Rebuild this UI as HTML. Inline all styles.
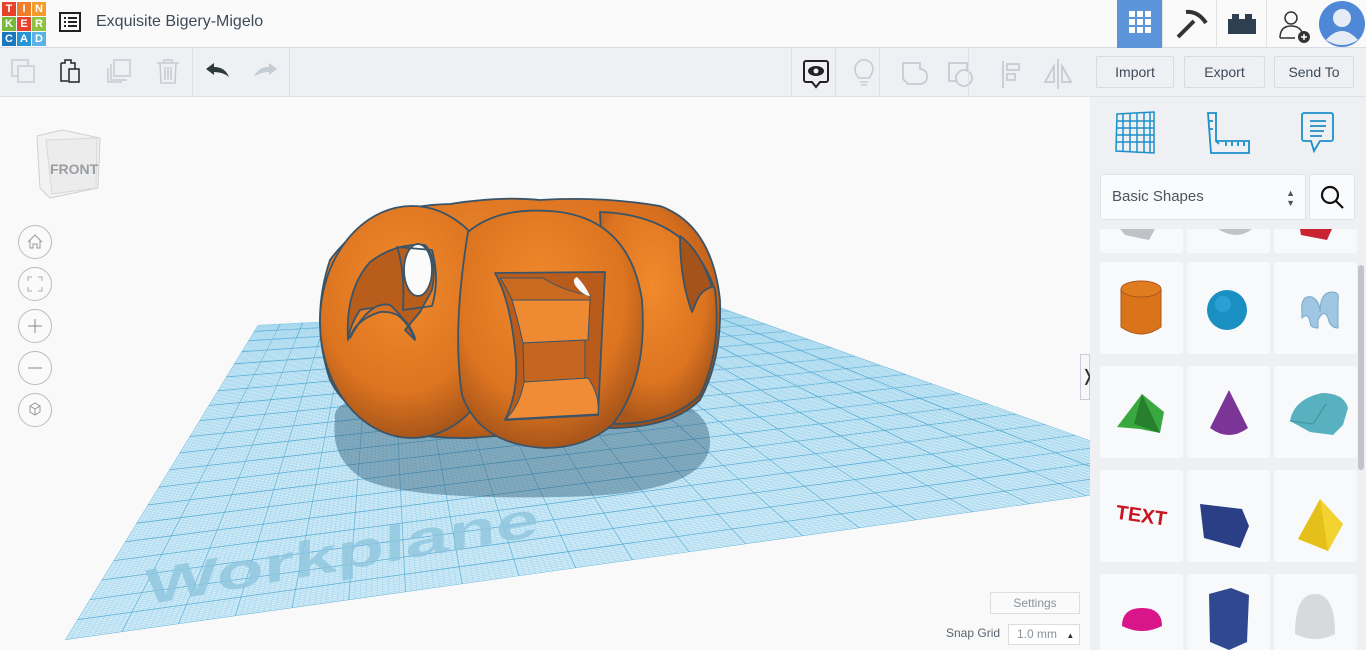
<!DOCTYPE html>
<html><head><meta charset="utf-8"><style>
*{box-sizing:border-box;margin:0;padding:0}
body{width:1366px;height:650px;overflow:hidden;background:#f9f9f9;font-family:"Liberation Sans",sans-serif;position:relative;color:#333}
.top{position:absolute;left:0;top:0;width:1366px;height:48px;background:#fafafa;border-bottom:1px solid #d8dde3}
.tool{position:absolute;left:0;top:48px;width:1366px;height:49px;background:#eef0f3;border-bottom:1px solid #dde1e6}
.logo{position:absolute;left:2px;top:2px}
.logo div{position:absolute;width:14px;height:14px;color:#fff;font-weight:bold;font-size:11px;text-align:center;line-height:14px}
.title{position:absolute;left:96px;top:13px;font-size:16px;color:#3d4a59}
.btn{position:absolute;top:56px;height:32px;border:1px solid #d8dce1;background:#eef0f3;border-radius:2px;font-size:14px;color:#3d4a59;text-align:center;line-height:30px}
.side{position:absolute;left:1090px;top:97px;width:276px;height:553px;background:#eef0f3}
.tile{position:absolute;width:83px;height:92px;background:#f8f9fa;border-radius:3px}
.nav{position:absolute;left:18px;width:34px;height:34px;border:1px solid #bbb;border-radius:50%;background:#fafafa}
</style></head><body>
<div class="top">
<div class="logo">
<div style="left:0;top:0;background:#e8412b">T</div><div style="left:15px;top:0;background:#f07d2a">I</div><div style="left:30px;top:0;background:#f59b2c">N</div>
<div style="left:0;top:15px;background:#79b83d">K</div><div style="left:15px;top:15px;background:#e8412b">E</div><div style="left:30px;top:15px;background:#8cc342">R</div>
<div style="left:0;top:30px;background:#1a76bd">C</div><div style="left:15px;top:30px;background:#2794d6">A</div><div style="left:30px;top:30px;background:#5ab3e4">D</div>
</div>
<svg style="position:absolute;left:59px;top:12px" width="22" height="22"><rect x="1" y="1" width="20" height="18" fill="none" stroke="#222" stroke-width="2"/><g fill="#222"><rect x="5" y="5" width="2" height="2"/><rect x="9" y="5" width="9" height="2"/><rect x="5" y="9" width="2" height="2"/><rect x="9" y="9" width="9" height="2"/><rect x="5" y="13" width="2" height="2"/><rect x="9" y="13" width="9" height="2"/></g></svg>
<div class="title">Exquisite Bigery-Migelo</div>
<div style="position:absolute;left:1117px;top:0;width:45px;height:48px;background:#5b94d9"></div>
<svg style="position:absolute;left:1129px;top:11px" width="22" height="24"><g fill="#fff"><rect x="0" y="0" width="6" height="6"/><rect x="8" y="0" width="6" height="6"/><rect x="16" y="0" width="6" height="6"/><rect x="0" y="8" width="6" height="6"/><rect x="8" y="8" width="6" height="6"/><rect x="16" y="8" width="6" height="6"/><rect x="0" y="16" width="6" height="6"/><rect x="8" y="16" width="6" height="6"/><rect x="16" y="16" width="6" height="6"/></g></svg>
<svg style="position:absolute;left:1174px;top:9px" width="34" height="30"><path d="M4 28 L20 12 M12 3 Q24 2 32 14" stroke="#333" stroke-width="4" fill="none"/></svg>
<div style="position:absolute;left:1162px;top:0;width:1px;height:48px;background:#e2e2e2"></div>
<div style="position:absolute;left:1216px;top:0;width:1px;height:48px;background:#e2e2e2"></div>
<div style="position:absolute;left:1266px;top:0;width:1px;height:48px;background:#e2e2e2"></div>
<svg style="position:absolute;left:1228px;top:14px" width="28" height="20"><path d="M0 5h4V0h7v5h6V0h7v5h4v15H0z" fill="#2f3f52"/></svg>
<svg style="position:absolute;left:1277px;top:10px" width="36" height="34"><circle cx="14" cy="8" r="6" fill="none" stroke="#333" stroke-width="1.5"/><path d="M3 28 Q3 16 14 16 Q22 16 25 22" fill="none" stroke="#333" stroke-width="1.5"/><line x1="3" y1="28" x2="18" y2="28" stroke="#333" stroke-width="1.5"/><circle cx="27" cy="27" r="6" fill="#333"/><path d="M24 27h6M27 24v6" stroke="#fff" stroke-width="1.5"/></svg>
<svg style="position:absolute;left:1318px;top:0" width="48" height="48"><circle cx="24" cy="24" r="23" fill="#4f88d6"/><circle cx="24" cy="18" r="9" fill="#e6ecf5"/><path d="M8 40 Q24 22 40 40 Q24 50 8 40z" fill="#e6ecf5"/></svg>
</div>
<div class="tool">
<svg style="position:absolute;left:10px;top:10px" width="28" height="28" fill="none" stroke="#c6ccd4" stroke-width="1.5"><rect x="2" y="2" width="16" height="16"/><rect x="8" y="8" width="16" height="16" fill="#eef0f3"/></svg>
<svg style="position:absolute;left:58px;top:9px" width="26" height="28" fill="none" stroke="#222" stroke-width="1.5"><path d="M3 6h4V3h6v3h4v6"/><path d="M3 6v18h7"/><rect x="11" y="12" width="10" height="13"/></svg>
<svg style="position:absolute;left:106px;top:10px" width="28" height="28" fill="none" stroke="#c6ccd4" stroke-width="1.5"><rect x="8" y="2" width="16" height="16"/><path d="M5 6v16h16M2 10v14h14"/></svg>
<svg style="position:absolute;left:156px;top:10px" width="24" height="28" fill="none" stroke="#c6ccd4" stroke-width="1.5"><path d="M1 5h22M8 5V2h8v3M4 5l1 20h14l1-20M9 9v13M12 9v13M15 9v13"/></svg>
<div style="position:absolute;left:192px;top:0;width:1px;height:48px;background:#dde1e6"></div>
<svg style="position:absolute;left:205px;top:14px" width="26" height="18"><path d="M1 7 L9 1 V5 Q20 5 24 15 Q18 10 9 10 V13z" fill="#2c3a3a"/></svg>
<svg style="position:absolute;left:252px;top:14px" width="26" height="18"><path d="M25 7 L17 1 V5 Q6 5 2 15 Q8 10 17 10 V13z" fill="#c6ccd4"/></svg>
<div style="position:absolute;left:289px;top:0;width:1px;height:48px;background:#dde1e6"></div>
<div style="position:absolute;left:791px;top:0;width:1px;height:48px;background:#dde1e6"></div>
<svg style="position:absolute;left:802px;top:11px" width="28" height="30"><path d="M4 2h20a2 2 0 0 1 2 2v17a2 2 0 0 1-2 2h-6l-4 5-4-5H4a2 2 0 0 1-2-2V4a2 2 0 0 1 2-2z" fill="none" stroke="#222" stroke-width="2"/><ellipse cx="14" cy="12" rx="8" ry="5" fill="#222"/><circle cx="14" cy="12" r="2.5" fill="#eef0f3"/></svg>
<div style="position:absolute;left:835px;top:0;width:1px;height:48px;background:#dde1e6"></div>
<svg style="position:absolute;left:852px;top:10px" width="24" height="32" fill="none" stroke="#c6ccd4" stroke-width="1.6"><path d="M7 20 Q1 14 4 7 Q8 1 13 2 Q20 3 21 10 Q21 15 17 20z M8 24h8M9 27h6"/></svg>
<div style="position:absolute;left:879px;top:0;width:1px;height:48px;background:#dde1e6"></div>
<svg style="position:absolute;left:900px;top:12px" width="30" height="28" fill="none" stroke="#c6ccd4" stroke-width="1.8"><path d="M3 3h17v6a7 7 0 0 1 7 8 7 7 0 0 1-7 7H8L3 19z"/></svg>
<svg style="position:absolute;left:946px;top:12px" width="30" height="28" fill="none" stroke="#c6ccd4" stroke-width="1.8"><rect x="3" y="3" width="18" height="18"/><circle cx="18" cy="18" r="8" fill="#eef0f3"/></svg>
<div style="position:absolute;left:968px;top:0;width:1px;height:48px;background:#dde1e6"></div>
<svg style="position:absolute;left:1000px;top:12px" width="24" height="28" fill="none" stroke="#c6ccd4" stroke-width="1.8"><path d="M3 1v27"/><rect x="7" y="4" width="12" height="6"/><rect x="7" y="14" width="8" height="6"/></svg>
<svg style="position:absolute;left:1042px;top:10px" width="34" height="32" fill="none" stroke="#c6ccd4" stroke-width="1.8"><path d="M16 1v30M12 8L3 24h9zM20 8l9 16h-9z"/></svg>
</div>
<div class="btn" style="left:1096px;width:78px">Import</div>
<div class="btn" style="left:1184px;width:81px">Export</div>
<div class="btn" style="left:1274px;width:80px">Send To</div>

<!-- viewport -->
<svg style="position:absolute;left:0;top:97px" width="1090" height="553" viewBox="0 97 1090 553">
<defs><clipPath id="cp"><polygon points="258,325 705,302 1200,480 65,640"/></clipPath>
<radialGradient id="og" cx="45%" cy="35%" r="65%"><stop offset="0" stop-color="#f08a2c"/><stop offset=".7" stop-color="#dc7420"/><stop offset="1" stop-color="#a9561a"/></radialGradient>
<radialGradient id="og2" cx="40%" cy="35%" r="70%"><stop offset="0" stop-color="#ef8a2e"/><stop offset=".75" stop-color="#d86f1f"/><stop offset="1" stop-color="#9c4e16"/></radialGradient>
</defs>
<polygon points="258,325 705,302 1200,480 65,640" fill="#d4edf8"/>
<g clip-path="url(#cp)" id="grid"></g>
<text x="0" y="0" font-size="62" font-weight="bold" fill="#8fc6de" opacity=".8" font-family="Liberation Sans" textLength="400" lengthAdjust="spacingAndGlyphs" transform="translate(145,605) rotate(-10) scale(1,0.8) skewX(-8)">Workplane</text>
<path d="M335 420 Q330 395 400 398 L640 395 Q712 400 710 445 Q705 495 560 497 Q410 500 365 480 Q330 460 335 420z" fill="#2f5d78" opacity=".45"/>
<g stroke="#3a5468" stroke-width="1.8" stroke-linejoin="round">
<!-- back body -->
<path d="M330 260 Q370 205 450 204 Q500 196 540 200 Q600 196 660 206 Q712 225 720 300 Q722 360 700 400 Q670 430 600 428 L470 438 Q360 440 330 380 Q310 320 330 260z" fill="url(#og2)"/>
<!-- left lobe -->
<ellipse cx="412" cy="322" rx="92" ry="116" fill="url(#og)"/>
<!-- right lobe -->
<path d="M600 212 Q690 215 715 290 Q722 350 700 395 Q670 425 610 424z" fill="url(#og)"/>
<!-- right hole -->
<path d="M680 236 Q700 250 712 287 Q700 290 695 305 L692 312 Q680 280 680 236z" fill="#a4531a"/>
<!-- left hole -->
<path d="M348 340 Q345 290 370 262 Q395 243 425 245 Q438 258 432 290 L420 312 L405 330 L415 340 Q400 300 360 310 Q350 325 348 340z" fill="#b95d1c"/>
<path d="M350 338 Q355 320 380 312 Q405 310 415 338 Q405 318 390 305 Q370 300 350 338z" fill="#d67022"/>
<ellipse cx="418" cy="270" rx="14" ry="26" fill="#fbfbfb"/>
<path d="M397 247 Q405 270 403 310 L432 306 Q440 280 432 250z" fill="none"/>
<!-- center front lobe -->
<path d="M468 232 Q500 205 560 212 Q630 222 642 300 Q648 380 612 425 Q585 448 545 448 Q480 445 462 395 Q452 330 468 232z" fill="url(#og)"/>
<!-- front hole -->
<path d="M495 273 L605 272 L598 415 L505 420 Q520 390 515 350 Q510 300 495 273z" fill="#b95b1b"/>
<path d="M543 278 Q565 292 590 295 L590 302 L512 300 Q505 285 500 278z" fill="#c96a20" stroke-width="1"/>
<path d="M512 300 L590 300 L588 340 L523 343 Q518 320 512 300z" fill="#ee8a32" stroke-width="1"/>
<path d="M523 343 L585 340 L585 380 L524 382z" fill="#c46520" stroke-width="1"/>
<path d="M524 382 L588 378 Q600 395 598 414 L506 419 Q520 405 524 382z" fill="#f08c35" stroke-width="1"/>
<path d="M577 277 Q585 285 590 296 Q582 295 575 285 Q572 279 577 277z" fill="#fbfbfb" stroke="none"/>
</g>
<g transform="translate(32,128)">
<path d="M5 8 L30 2 L68 10 L66 60 L18 70 L8 60z" fill="#f2f2f2" stroke="#cfcfcf"/>
<path d="M14 12 L65 10 L64 60 L20 66z" fill="#ececec" stroke="#d8d8d8"/>
<text x="18" y="46" font-size="14" font-weight="bold" fill="#9a9ea3" font-family="Liberation Sans">FRONT</text>
</g>
</svg>
<div class="nav" style="top:225px"><svg width="32" height="32"><path d="M9 16l7-7 7 7M11 14v8h3v-4h4v4h3v-8" fill="none" stroke="#999"/></svg></div>
<div class="nav" style="top:267px"><svg width="32" height="32" fill="none" stroke="#aaa"><path d="M9 13V9h4M19 9h4v4M23 19v4h-4M13 23H9v-4"/></svg></div>
<div class="nav" style="top:309px"><svg width="32" height="32"><path d="M9 16h14M16 9v14" stroke="#888"/></svg></div>
<div class="nav" style="top:351px"><svg width="32" height="32"><path d="M9 16h14" stroke="#888"/></svg></div>
<div class="nav" style="top:393px"><svg width="32" height="32" fill="none" stroke="#999"><path d="M11 12l5-3 5 3v6l-5 3-5-3zM11 12l5 3 5-3M16 15v6"/></svg></div>
<div style="position:absolute;left:990px;top:592px;width:90px;height:22px;border:1px solid #ddd;background:#fafafa;font-size:12px;color:#8a929a;text-align:center;line-height:20px">Settings</div>
<div style="position:absolute;left:946px;top:626px;font-size:12px;color:#5a6470">Snap Grid</div>
<div style="position:absolute;left:1008px;top:624px;width:72px;height:21px;border:1px solid #ddd;background:#fff;font-size:12px;color:#8a929a;line-height:19px;padding-left:8px">1.0 mm <span style="font-size:8px;color:#333;margin-left:6px">▲</span></div>
<div style="position:absolute;left:1080px;top:354px;width:10px;height:46px;border:1px solid #ccd;background:#f8f8f8;font-size:16px;line-height:44px;text-align:center">❭</div>

<div class="side">
<svg style="position:absolute;left:24px;top:14px" width="44" height="44" fill="none" stroke="#1d8fc9" stroke-width="1.5"><path d="M3 3 L40 1 L40 42 L2 40z"/><path d="M3 10h37M3 17h37M3 24h37M3 31h37M9 2v39M16 2v39M23 2v40M30 1v41M36 1v41"/></svg>
<svg style="position:absolute;left:116px;top:14px" width="46" height="46" fill="none" stroke="#1d8fc9" stroke-width="1.8"><path d="M2 2h8v28h33v12H5zM10 30l3 3"/><path d="M20 31v4M26 31v4M32 31v4M38 31v4M3 10h4M3 18h4"/></svg>
<svg style="position:absolute;left:210px;top:14px" width="36" height="46" fill="none" stroke="#1d8fc9" stroke-width="1.8"><path d="M4 2h27a2 2 0 0 1 2 2v24a2 2 0 0 1-2 2H20l-6 10-3-10H4a2 2 0 0 1-2-2V4a2 2 0 0 1 2-2zM10 10h16M10 15h16M10 20h14M10 25h12"/></svg>
<div style="position:absolute;left:10px;top:77px;width:206px;height:46px;background:#fafbfc;border:1px solid #dfe3e8;border-radius:3px;font-size:15px;color:#4a5562;line-height:44px;padding-left:11px">Basic Shapes<span style="position:absolute;right:10px;top:0;font-size:9px;line-height:10px;padding-top:13px">▲<br>▼</span></div>
<div style="position:absolute;left:219px;top:77px;width:46px;height:46px;background:#fafbfc;border:1px solid #dfe3e8;border-radius:3px"><svg width="44" height="44" fill="none" stroke="#111" stroke-width="2.2"><circle cx="20" cy="20" r="8"/><path d="M26 26l7 7"/></svg></div>
<div style="position:absolute;left:0;top:132px;width:276px;height:421px;overflow:hidden">
<div class="tile" style="left:10px;top:-68px"></div><div class="tile" style="left:97px;top:-68px"></div><div class="tile" style="left:184px;top:-68px"></div>
<div class="tile" style="left:10px;top:33px"></div><div class="tile" style="left:97px;top:33px"></div><div class="tile" style="left:184px;top:33px"></div>
<div class="tile" style="left:10px;top:137px"></div><div class="tile" style="left:97px;top:137px"></div><div class="tile" style="left:184px;top:137px"></div>
<div class="tile" style="left:10px;top:241px"></div><div class="tile" style="left:97px;top:241px"></div><div class="tile" style="left:184px;top:241px"></div>
<div class="tile" style="left:10px;top:345px"></div><div class="tile" style="left:97px;top:345px"></div><div class="tile" style="left:184px;top:345px"></div>
<svg style="position:absolute;left:0;top:0" width="270" height="421">
<path d="M30 0h35l-6 11-24-5z" fill="#bfc3c8"/><path d="M128 0h34q-15 12-34 0z" fill="#c0c3c8"/><path d="M210 0h32l-5 11-26-5z" fill="#c72331"/>
<path d="M31 60v38q20 14 40 0v-38z" fill="#d9741a" stroke="#a9561a"/><ellipse cx="51" cy="60" rx="20" ry="8" fill="#e07c20" stroke="#a9561a"/>
<circle cx="137" cy="81" r="20" fill="#1a8fc2"/><circle cx="133" cy="75" r="8" fill="#2aa0d4"/>
<path d="M212 85q-2-20 10-17 8 4 8 15 0-20 12-20 8 0 6 8v28q-8 0-10-10-4-10-10 2l0 8q-8 0-8-6-2-10-8-4z" fill="#9fc6e2" stroke="#7aa8ca"/>
<path d="M27 198l25-33 22 18-4 21-20-4z" fill="#39a83e"/><path d="M52 165l-8 30 26 9z" fill="#287f2d"/>
<path d="M139 161l-19 38q19 14 38 0z" fill="#7a3596"/>
<path d="M200 192q4-22 32-28 22 0 26 15l-5 17-10 10-23-3z" fill="#58b1bf"/><path d="M200 192l23 3 13-20" fill="none" stroke="#3f8f9c"/>
<text x="26" y="293" font-size="20" font-weight="bold" fill="#c8151f" transform="rotate(8 50 285)" font-family="Liberation Sans">TEXT</text>
<path d="M110 275l42 5 7 17-9 22-36-10z" fill="#2a3f86"/>
<path d="M230 270l-22 40 30 12 15-27z" fill="#e5c01a"/><path d="M230 270l8 52 15-27z" fill="#f2d330"/>
<path d="M32 397q0-18 20-18 20 0 20 18-20 10-40 0z" fill="#d8168a"/>
<path d="M119 365l22-6 18 7-2 47-18 8-19-8z" fill="#2f4890"/>
<path d="M205 405q0-40 20-40 20 0 20 40-20 10-40 0z" fill="#d7d9db"/>
</svg>
<div style="position:absolute;right:2px;top:36px;width:6px;height:205px;background:#c1c4c8;border-radius:3px"></div>
</div>
</div>
<script>
(function(){
var A=[258,325],B=[705,302],C=[1200,480],D=[65,640];
function L(p,q,t){return [p[0]+(q[0]-p[0])*t,p[1]+(q[1]-p[1])*t]}
var g=document.getElementById('grid'),s='';
var N=200;
for(var i=0;i<=N;i++){
 var t=i/N, tt=Math.pow(t,1.3);
 var major=i%10==0;
 var c=major?'#5fb0d8':'#9fd4ec',w=major?0.9:0.5;
 var p=L(A,B,t),q=L(D,C,t);
 s+='<line x1="'+p[0]+'" y1="'+p[1]+'" x2="'+q[0]+'" y2="'+q[1]+'" stroke="'+c+'" stroke-width="'+w+'"/>';
 var r=L(A,D,tt),u=L(B,C,tt);
 s+='<line x1="'+r[0]+'" y1="'+r[1]+'" x2="'+u[0]+'" y2="'+u[1]+'" stroke="'+c+'" stroke-width="'+w+'"/>';
}
g.innerHTML=s;
})();
</script>
</body></html>
